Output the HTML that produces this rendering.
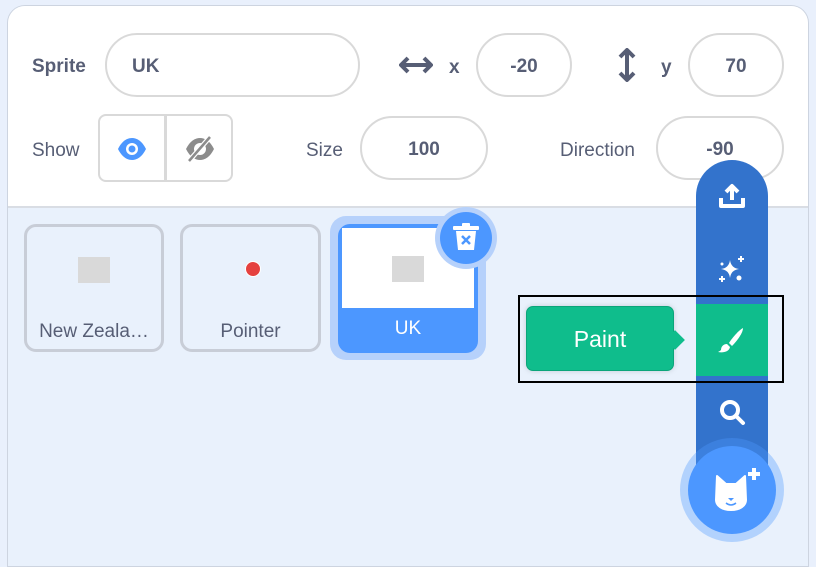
<!DOCTYPE html>
<html><head><style>
body{margin:0;width:816px;height:558px;background:#e9f0fc;font-family:"Liberation Sans",sans-serif;position:relative;overflow:hidden;color:#575e75}
.a{position:absolute}
.panel{left:7px;top:5px;width:800px;height:560px;border:1px solid #cdd4e0;border-radius:18px 18px 0 0;background:#e9f1fc;overflow:hidden}
.top{left:0;top:0;width:800px;height:200px;background:#fff;border-bottom:2px solid #d9dde4}
.inp{border:2px solid #d9d9d9;border-radius:32px;background:#fff;font-weight:bold;font-size:19px;color:#575e75;display:flex;align-items:center;justify-content:center;box-sizing:border-box;padding-top:3px}
.lbl{font-size:19px;color:#575e75}
.card{border:3px solid #c8cdd7;border-radius:12px;box-sizing:border-box;background:#e9f1fc}
.cl{font-size:19px;width:100%;text-align:center}
</style></head><body>
<div class="a panel">
 <div class="a top"></div>
</div>
<div class="a lbl" style="left:32px;top:56px;font-weight:bold">Sprite</div>
<div class="a inp" style="left:105px;top:33px;width:255px;height:64px;justify-content:flex-start;padding-left:25px">UK</div>
<svg class="a" style="left:399px;top:55px" width="34" height="20" viewBox="0 0 34 20"><path d="M2 10h30M9 3L2 10l7 7M25 3l7 7-7 7" fill="none" stroke="#575e75" stroke-width="4" stroke-linejoin="round"/></svg>
<div class="a lbl" style="left:449px;top:57px;font-weight:bold">x</div>
<div class="a inp" style="left:476px;top:33px;width:96px;height:64px">-20</div>
<svg class="a" style="left:617px;top:48px" width="20" height="34" viewBox="0 0 20 34"><path d="M10 2v30M3 9l7-7 7 7M3 25l7 7 7-7" fill="none" stroke="#575e75" stroke-width="4" stroke-linejoin="round"/></svg>
<div class="a lbl" style="left:661px;top:57px;font-weight:bold">y</div>
<div class="a inp" style="left:688px;top:33px;width:96px;height:64px">70</div>

<div class="a lbl" style="left:32px;top:140px">Show</div>
<div class="a" style="left:98px;top:114px;width:135px;height:68px;border:2px solid #d9d9d9;border-radius:8px;box-sizing:border-box;background:#fff"></div>
<div class="a" style="left:164px;top:115px;width:3px;height:66px;background:#d9d9d9"></div>
<svg class="a" style="left:117px;top:137px" width="30" height="24" viewBox="0 0 30 24"><path d="M1 12C5 4 10 1 15 1s10 3 14 11c-4 8-9 11-14 11S5 20 1 12z" fill="#4c97ff"/><circle cx="15" cy="12" r="6" fill="#fff"/><circle cx="15" cy="12" r="3.5" fill="#4c97ff"/></svg>
<svg class="a" style="left:185px;top:135px" width="30" height="28" viewBox="0 0 30 28"><path d="M1 14C5 6 10 3 15 3s10 3 14 11c-4 8-9 11-14 11S5 22 1 14z" fill="#8c8c8c"/><circle cx="15" cy="14" r="6" fill="#fff"/><path d="M25 2L4 26" stroke="#fff" stroke-width="5"/><path d="M25 2L4 26" stroke="#8c8c8c" stroke-width="2.5"/></svg>
<div class="a lbl" style="left:306px;top:140px">Size</div>
<div class="a inp" style="left:360px;top:116px;width:128px;height:64px">100</div>
<div class="a lbl" style="left:560px;top:140px">Direction</div>
<div class="a inp" style="left:656px;top:116px;width:128px;height:64px">-90</div>

<div class="a card" style="left:24px;top:224px;width:140px;height:128px"><div class="a" style="left:51px;top:30px;width:32px;height:26px;background:#d9d9d9"></div><div class="a cl" style="top:94px;color:#575e75">New Zeala…</div></div>
<div class="a card" style="left:180px;top:224px;width:141px;height:128px"><div class="a" style="left:62px;top:34px;width:14px;height:14px;border-radius:50%;background:#e5413f;border:1.5px solid #fff"></div><div class="a cl" style="top:94px">Pointer</div></div>
<div class="a" style="left:330px;top:216px;width:156px;height:144px;border-radius:16px;background:#b6d1fb"></div>
<div class="a" style="left:338px;top:224px;width:140px;height:129px;border-radius:12px;background:#4c97ff;overflow:hidden"><div class="a" style="left:4px;top:4px;width:132px;height:80px;background:#fff"></div><div class="a" style="left:54px;top:32px;width:32px;height:26px;background:#d9d9d9"></div><div class="a cl" style="top:94px;color:#fff">UK</div></div>
<div class="a" style="left:435px;top:207px;width:62px;height:62px;border-radius:50%;background:#b6d1fb"></div>
<div class="a" style="left:440px;top:212px;width:52px;height:52px;border-radius:50%;background:#4c97ff"></div>
<svg class="a" style="left:451px;top:220px" width="30" height="34" viewBox="0 0 30 34"><rect x="2" y="6" width="26" height="4" rx="1" fill="#fff"/><rect x="11" y="3" width="8" height="4" rx="1" fill="#fff"/><path d="M5 11h20l-2 19H7z" fill="#fff"/><path d="M11 16l8 8M19 16l-8 8" stroke="#4c97ff" stroke-width="2.5"/></svg>

<div class="a" style="left:696px;top:160px;width:72px;height:320px;border-radius:36px 36px 0 0;background:#3373cc"></div>
<div class="a" style="left:696px;top:304px;width:72px;height:72px;background:#0fbd8c"></div>
<svg class="a" style="left:717px;top:182px" width="30" height="30" viewBox="0 0 30 30"><path d="M15 18V4M9 10l6-6 6 6" fill="none" stroke="#fff" stroke-width="4" stroke-linejoin="round"/><path d="M4 16v8h22v-8" fill="none" stroke="#fff" stroke-width="4" stroke-linejoin="round"/></svg>
<svg class="a" style="left:717px;top:254px" width="30" height="30" viewBox="0 0 30 30"><path d="M13 6q1 8 9 9-8 1-9 9-1-8-9-9 8-1 9-9z" fill="#fff"/><path d="M24 2v6M21 5h6M5 22v6M2 25h6" stroke="#fff" stroke-width="2"/><circle cx="22" cy="24" r="2.5" fill="#fff"/><circle cx="5" cy="10" r="1.5" fill="#fff"/></svg>
<svg class="a" style="left:716px;top:325px" width="30" height="30" viewBox="0 0 30 30"><path d="M27 3c-4 2-11 10-14 15l3 3c5-5 11-13 11-18z" fill="#fff"/><path d="M11 19c-4 0-6 3-6 6-1 1-3 2-3 2 5 1 11 0 12-5z" fill="#fff"/></svg>
<svg class="a" style="left:717px;top:397px" width="30" height="30" viewBox="0 0 30 30"><circle cx="13" cy="13" r="8" fill="none" stroke="#fff" stroke-width="4"/><path d="M19 19l7 7" stroke="#fff" stroke-width="4" stroke-linecap="round"/></svg>
<div class="a" style="left:680px;top:438px;width:104px;height:104px;border-radius:50%;background:rgba(76,151,255,.35)"></div>
<div class="a" style="left:688px;top:446px;width:88px;height:88px;border-radius:50%;background:#4c97ff"></div>
<svg class="a" style="left:712px;top:466px" width="50" height="46" viewBox="0 0 50 46"><path d="M42 2v12M36 8h12" stroke="#fff" stroke-width="4"/><path d="M5 10l9 8h10l9-8 1 24c0 5-5 10-15 10S4 39 4 34z" fill="#fff" stroke="#fff" stroke-linejoin="round" stroke-width="2"/><path d="M16 32h6l-3 3z" fill="#4c97ff"/><path d="M14 37q5 4 10 0" fill="none" stroke="#4c97ff" stroke-width="1.5"/></svg>

<div class="a" style="left:526px;top:306px;width:148px;height:65px;border-radius:7px;background:#0fbd8c;box-shadow:0 0 6px rgba(0,0,0,.15);border:1px solid #0ba57a;box-sizing:border-box;color:#fff;font-size:23px;display:flex;align-items:center;justify-content:center;padding-top:2px">Paint</div>
<div class="a" style="left:668px;top:333px;width:14px;height:14px;background:#0fbd8c;transform:rotate(45deg)"></div>
<div class="a" style="left:518px;top:295px;width:266px;height:88px;border:2px solid #000;box-sizing:border-box"></div>
</body></html>
